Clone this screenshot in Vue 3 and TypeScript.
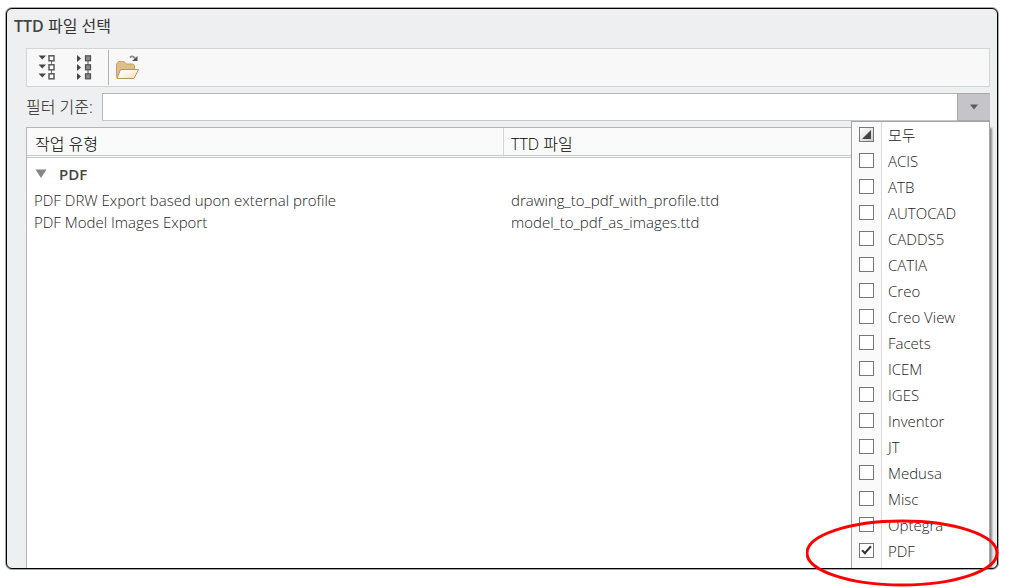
<script setup lang="ts">
import { ref, computed } from 'vue'

interface TtdFile {
  task: string
  file: string
}

const filterText = ref('')
const menuOpen = ref(true)
const groupOpen = ref(true)

const types = [
  'ACIS', 'ATB', 'AUTOCAD', 'CADDS5', 'CATIA', 'Creo', 'Creo View', 'Facets',
  'ICEM', 'IGES', 'Inventor', 'JT', 'Medusa', 'Misc', 'Optegra', 'PDF',
]
const selected = ref<string[]>(['PDF'])

const allSelected = computed(() => selected.value.length === types.length)
const someSelected = computed(() => selected.value.length > 0 && !allSelected.value)

function toggleAll(): void {
  selected.value = allSelected.value ? [] : [...types]
}

const files: TtdFile[] = [
  { task: 'PDF DRW Export based upon external profile', file: 'drawing_to_pdf_with_profile.ttd' },
  { task: 'PDF Model Images Export', file: 'model_to_pdf_as_images.ttd' },
]
</script>

<template>
  <div class="page">
    <main class="dialog">
      <h1 class="title"><b>TTD</b> 파일 선택</h1>

      <div class="body">
        <div class="toolbar">
          <button class="tool" type="button" aria-label="모두 확장" @click="groupOpen = true">
            <svg width="20" height="26" viewBox="0 0 20 26">
              <g fill="#444">
                <path d="M0.500 0.500h7.500L4.250 4.500z" /><path d="M0.500 9.500h7.500L4.250 13.500z" /><path d="M0.500 18.500h7.500L4.250 22.500z" />
              </g>
              <path d="M13.500 6v4M13.500 15v4" stroke="#777" />
              <g fill="#fff" stroke="#5a5a5a" stroke-width="1.500">
                <rect x="11" y="0.800" width="5" height="5" /><rect x="11" y="9.800" width="5" height="5" /><rect x="11" y="18.800" width="5" height="5" />
              </g>
            </svg>
          </button>
          <button class="tool" type="button" aria-label="모두 축소" @click="groupOpen = false">
            <svg width="20" height="26" viewBox="0 0 20 26">
              <g fill="#444">
                <path d="M1 0l4 3.500L1 7z" /><path d="M1 9l4 3.500L1 16z" /><path d="M1 18l4 3.500L1 25z" />
              </g>
              <path d="M12 6v4M12 15v4" stroke="#555" />
              <g fill="#8a8a8a" stroke="#505050" stroke-width="1.200">
                <rect x="9.500" y="0.800" width="5" height="5" /><rect x="9.500" y="9.800" width="5" height="5" /><rect x="9.500" y="18.800" width="5" height="5" />
              </g>
            </svg>
          </button>
          <span class="separator"></span>
          <button class="tool open" type="button" aria-label="열기">
            <svg width="26" height="26" viewBox="0 0 26 26">
              <defs>
                <linearGradient id="flap" x1="0" y1="0" x2="1" y2="1">
                  <stop offset="0.300" stop-color="#fffefa" />
                  <stop offset="1" stop-color="#f8d9a0" />
                </linearGradient>
              </defs>
              <path d="M1.500 21.500V9L3.500 6.500h5.500L11 9h7l1.500 1.500V14L17 23.500H2.500z" fill="#dfbf87" stroke="#c5a063" />
              <path d="M5.500 14.500h18L19 23.500H2z" fill="url(#flap)" stroke="#b9975c" stroke-linejoin="round" />
              <path d="M15 2.500C17 0.500 19 1.500 20 3.500" fill="none" stroke="#888" stroke-width="1.800" />
              <path d="M22.500 1v5H17z" fill="#555" />
            </svg>
          </button>
        </div>

        <div class="filter">
          <label for="filter">필터 기준:</label>
          <div class="combo">
            <input id="filter" v-model="filterText" class="combo-input" type="text" />
            <button class="combo-button" type="button" aria-label="유형 목록" :aria-expanded="menuOpen" @click="menuOpen = !menuOpen">
              <svg width="10" height="6" viewBox="0 0 10 6"><path d="M1 0.500h8L5 5.500z" fill="#5c5c5c" /></svg>
            </button>
            <div v-if="menuOpen" class="menu">
              <label class="option">
                <span class="tick">
                  <input type="checkbox" :checked="allSelected" :indeterminate.prop="someSelected" @change="toggleAll" />
                </span>
                <span class="name">모두</span>
              </label>
              <label v-for="type in types" :key="type" class="option">
                <span class="tick"><input v-model="selected" type="checkbox" :value="type" /></span>
                <span class="name">{{ type }}</span>
              </label>
              <div class="menu-rest"></div>
            </div>
          </div>
        </div>

        <div class="list">
          <table>
            <thead>
              <tr>
                <th class="task" scope="col">작업 유형</th>
                <th scope="col">TTD 파일</th>
              </tr>
            </thead>
            <tbody>
              <tr class="group">
                <td colspan="2">
                  <button class="group-button" type="button" :aria-expanded="groupOpen" @click="groupOpen = !groupOpen">
                    <svg width="12" height="10" viewBox="0 0 12 10"><path d="M0.500 0.500h11L6 9z" fill="#858585" /></svg>
                    <span>PDF</span>
                  </button>
                </td>
              </tr>
              <template v-if="groupOpen">
                <tr v-for="row in files" :key="row.file">
                  <td>{{ row.task }}</td>
                  <td>{{ row.file }}</td>
                </tr>
              </template>
            </tbody>
          </table>
        </div>
      </div>
    </main>
    <svg class="callout" viewBox="0 0 194 68" aria-hidden="true">
      <ellipse cx="96" cy="34" rx="95" ry="32" fill="none" stroke="#f00" stroke-width="3" />
    </svg>
  </div>
</template>

<style>
body {
  margin: 0;
  background: #fff;
}
</style>

<style scoped>
.page {
  position: relative;
  box-sizing: border-box;
  display: flex;
  min-height: 100vh;
  padding: 8px 12px 19px 6px;
  font-family: "Open Sans", "Noto Sans CJK KR", sans-serif;
  font-size: 15px;
  font-weight: 300;
  line-height: 22px;
  color: #222;
}

button,
input {
  margin: 0;
  padding: 0;
  font: inherit;
  color: inherit;
}

button {
  border: 0;
  background: none;
}

svg {
  display: block;
}

.dialog {
  flex: 1;
  display: flex;
  flex-direction: column;
  min-width: 0;
  overflow: hidden;
  border: 1px solid #000;
  border-radius: 6px;
  box-shadow: 0 0 0 1px #aaa;
  background: #eeeff1;
}

.title {
  margin: 0;
  padding: 6px 7px 11px;
  font-size: 16px;
  font-weight: 400;
  line-height: 22px;
  color: #333;
}

.title b {
  font-weight: 600;
  color: #444;
}

.body {
  flex: 1;
  display: flex;
  flex-direction: column;
  padding: 0 7px 0 19px;
}

.toolbar {
  display: flex;
  align-items: center;
  height: 37px;
  padding-left: 11px;
  border: 1px solid #d1d5d5;
  background: #f8f8f8;
}

.tool {
  margin-right: 18px;
}

.separator {
  width: 1px;
  height: 35px;
  margin-left: -6px;
  margin-right: 6px;
  background: #b4b4b4;
}

.filter {
  display: flex;
  align-items: center;
  gap: 9px;
  padding: 6px 0;
  font-size: 16px;
}

.combo {
  position: relative;
  flex: 1;
  display: flex;
  height: 28px;
}

.combo-input {
  flex: 1;
  min-width: 0;
  padding: 0 6px;
  border: 1px solid #b2b4b6;
  border-bottom-color: #c4c8ca;
  border-right: 0;
  background: #fff;
  outline: 0;
}

.combo-button {
  display: flex;
  align-items: center;
  justify-content: center;
  width: 33px;
  border: 1px solid #a9a9ab;
  border-width: 1px 0 1px 1px;
  background: #c5c4c9;
}

.menu {
  position: absolute;
  z-index: 1;
  top: 28px;
  right: 0;
  display: flex;
  flex-direction: column;
  box-sizing: border-box;
  width: 139px;
  height: 100vh;
  border: 1px solid #a4a4a6;
  background: #fff;
  box-shadow: 3px 6px 2px -1px #888;
  font-size: 15px;
}

.option {
  display: flex;
  height: 26px;
}

.tick {
  box-sizing: border-box;
  width: 30px;
  padding: 5px 0 0 7px;
  border-right: 1px solid #dcdcdc;
  background: #fafafa;
}

.menu-rest {
  flex: 1;
  box-sizing: border-box;
  width: 30px;
  border-right: 1px solid #dcdcdc;
  background: #fafafa;
}

.tick input {
  appearance: none;
  position: relative;
  display: block;
  box-sizing: border-box;
  width: 15px;
  height: 15px;
  border: 1px solid #777;
  background: #fff;
}

.tick input:indeterminate {
  background: linear-gradient(135deg, #fff, #ccc);
}

.tick input:indeterminate::before {
  content: "";
  position: absolute;
  inset: 2px;
  background: #444;
  clip-path: polygon(100% 0, 100% 100%, 0 100%);
}

.tick input:checked::before {
  content: "";
  position: absolute;
  top: 0;
  left: 4px;
  width: 3px;
  height: 8px;
  border: solid #333;
  border-width: 0 2px 2px 0;
  transform: rotate(42deg);
}

.name {
  padding: 2px 0 0 6px;
}

.list {
  flex: 1;
  border: 1px solid #b2b4b6;
  border-bottom: 0;
  background: #fff;
}

table {
  width: 100%;
  table-layout: fixed;
  border-collapse: separate;
  border-spacing: 0;
}

th {
  height: 22px;
  padding: 5px 0 0 7px;
  border-bottom: 3px double #c6c9c9;
  background: #fafafa;
  color: #000;
  font-size: 16px;
  font-weight: 300;
  text-align: left;
}

.task {
  width: 468px;
  padding-left: 8px;
  border-right: 1px solid #d1d5d5;
}

td {
  height: 22px;
  padding: 0 0 0 7px;
  line-height: 20px;
  vertical-align: top;
}

.group td {
  height: 32px;
  vertical-align: middle;
}

.group-button {
  display: flex;
  align-items: center;
  gap: 12px;
  padding-left: 1px;
  font-weight: 600;
  color: #444;
}

.callout {
  position: absolute;
  z-index: 2;
  right: 10px;
  bottom: 1px;
  width: 194px;
  height: 68px;
  pointer-events: none;
}
</style>
